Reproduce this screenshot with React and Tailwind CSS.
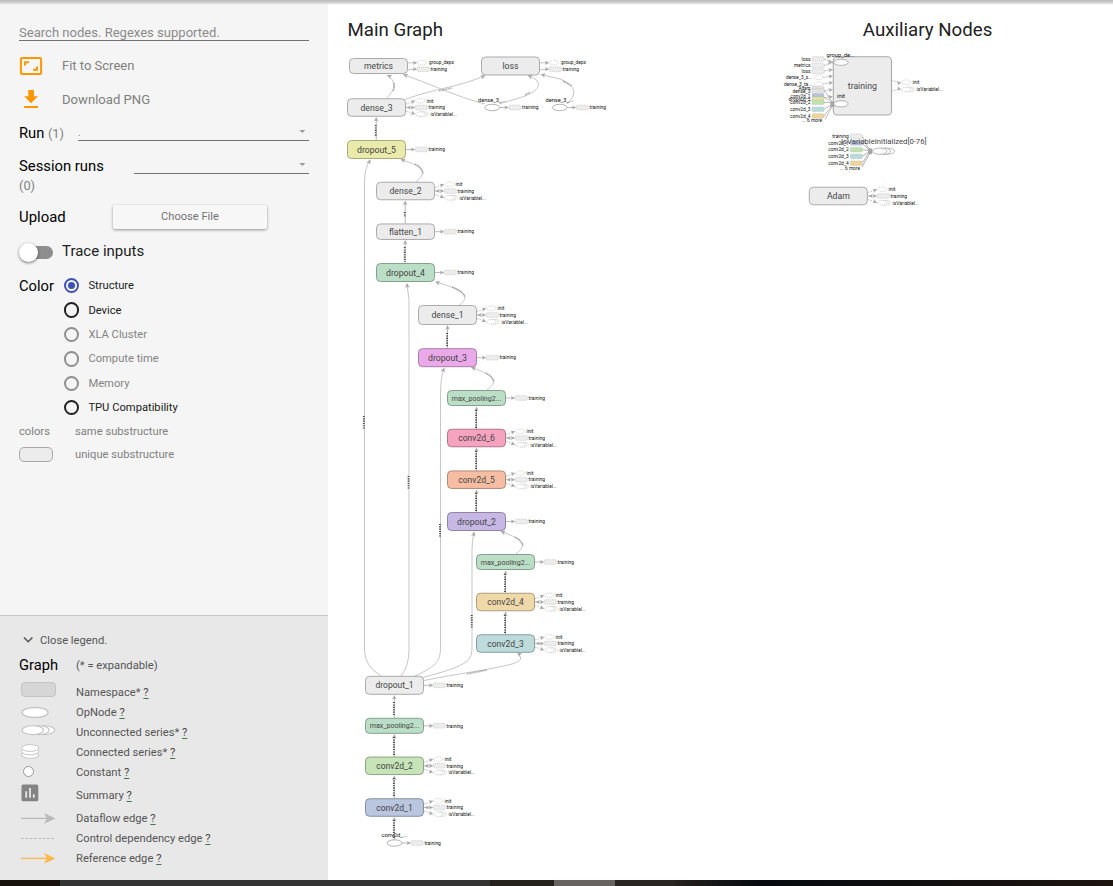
import React from "react";

const GREY = "#ececec";

// [label, centre x, centre y, height, fill, stroke, annotation kind]
const NODES = [
  ["metrics", 378.5, 66, 15, GREY, "#ababab", "none"],
  ["loss", 510.5, 66, 18, GREY, "#ababab", "none"],
  ["dense_3", 376.5, 107.5, 17.5, GREY, "#ababab", "full"],
  ["dropout_5", 376.5, 149.5, 18, "#eaeaaa", "#a9a97c", "one"],
  ["dense_2", 405.5, 191, 17.5, GREY, "#ababab", "full"],
  ["flatten_1", 405.5, 231.7, 15.5, GREY, "#ababab", "one"],
  ["dropout_4", 405.5, 272.5, 18, "#bbdec6", "#86a08f", "one"],
  ["dense_1", 447.5, 315, 19, GREY, "#ababab", "full"],
  ["dropout_3", 447.5, 357.7, 18, "#eaaaea", "#a97ca9", "one"],
  ["max_pooling2...", 476.5, 398, 15, "#bbdec6", "#86a08f", "one"],
  ["conv2d_6", 476.5, 438, 17.5, "#f6a3c0", "#b1768b", "full"],
  ["conv2d_5", 476.5, 479.7, 17.5, "#f6bda3", "#b18876", "full"],
  ["dropout_2", 476.5, 521.5, 18, "#c6b7e4", "#8f84a4", "one"],
  ["max_pooling2...", 505.5, 562, 15, "#bbdec6", "#86a08f", "one"],
  ["conv2d_4", 505.5, 602, 17.5, "#f0d9a9", "#ad9c7a", "full"],
  ["conv2d_3", 505.5, 643.5, 17.5, "#bddbdb", "#889e9e", "full"],
  ["dropout_1", 394.5, 685.3, 18, GREY, "#ababab", "one"],
  ["max_pooling2...", 394.5, 725.8, 15, "#bbdec6", "#86a08f", "one"],
  ["conv2d_2", 394.5, 765.8, 17.5, "#c6e4b7", "#8fa484", "full"],
  ["conv2d_1", 394.5, 807.5, 17.5, "#bac5e0", "#868ea1", "full"],
];

const WIDTHS = {
  metrics: 29, loss: 16, dense_3: 32, dense_2: 32, dense_1: 32, flatten_1: 33,
  dropout_1: 38, dropout_2: 39, dropout_3: 39, dropout_4: 39, dropout_5: 39,
  conv2d_1: 36.5, conv2d_2: 36.5, conv2d_3: 36.5, conv2d_4: 36.5, conv2d_5: 36.5, conv2d_6: 36.5,
  "max_pooling2...": 49.5,
};

// Vertical edges with their shape label: [x, arrow tip y, tail y, label start, label end]
const VERTICAL = [
  [376.2, 117, 140, 125, 137],
  [405.2, 200.5, 224, 212, 217],
  [405.2, 240, 263, 247, 262],
  [447.5, 325, 348, 333, 347],
  [476.5, 406.5, 429, 410, 428],
  [476.5, 447.5, 471, 451, 470],
  [476.5, 489.5, 512, 493, 512],
  [505.5, 570.5, 593, 574, 592],
  [505.5, 611.5, 635, 615, 634],
  [394.3, 695, 718, 702, 716],
  [394.3, 734, 757, 737, 756],
  [394.3, 775.5, 799, 778, 797],
  [394.3, 817, 840, 820, 839],
];

const EDGES = [
  "M386 99 C394 90 399 84 387 75",
  "M405 99.5 C432 89 460 87 485 75.5",
  "M485 104 C460 98 436 86 403 74.5",
  "M499 104 C522 97 533 95 538 87 Q541 80 528 75.5",
  "M567 104 C577 95 577 86 560 79 L541 74.5",
  "M416 182 C427 173 425 167 401 159.5",
  "M459 305.5 C470 297 467 291 436 282",
  "M487 390 C498 382 496 376 472 367.5",
  "M516 554 C527 545 525 540 501 531.5",
  "M381 676 Q364.5 666 364.5 650 L364.5 182 Q364.5 168 370 160",
  "M401 676 Q409 666 409 650 L409 300 L407 284",
  "M415 676 C436 666 440.5 662 440.5 647 L440.5 395 Q440.5 377 444 368.5",
  "M423 677.5 C465 666 472 662 472 648 L472 550 Q472 540 474 532.5",
  "M424 680.5 C461 673 489 670 512 664 Q526 660 518 653.5",
];

const ARROWS = [
  [387, 75, 205], [485.5, 75.3, -25], [403, 74.5, 197], [527.5, 75, 205], [540.5, 74.3, 195],
  [400.5, 159.3, 198], [435, 281.8, 197], [471, 367.2, 200], [500.5, 531.3, 200],
  [370.5, 159.3, -62], [406.8, 283, -98], [444.3, 367.5, -70], [474.3, 531.5, -78], [517, 652.5, 215],
];

function Arrow({ x, y, a = 0, s = 1, fill = "#aaa" }) {
  return <path d="M0 0L-4.4 2.1L-3.4 0L-4.4 -2.1Z" fill={fill} transform={`translate(${x} ${y}) rotate(${a}) scale(${s})`} />;
}

function Tiny({ x, y, children, w, anchor = "start" }) {
  return (
    <text x={x} y={y} fontSize="5" fill="#111" textAnchor={anchor} textLength={w} lengthAdjust="spacingAndGlyphs">
      {children}
    </text>
  );
}

function Pill({ x, y, fill = "#ededed" }) {
  return <rect x={x} y={y - 2.3} width="12" height="4.6" rx="1.2" fill={fill} stroke="#b8b8b8" strokeWidth="0.6" strokeDasharray="1.3 0.9" />;
}

function Oval({ x, y, rx = 4.6, ry = 2.3 }) {
  return <ellipse cx={x} cy={y} rx={rx} ry={ry} fill="#fff" stroke="#bbb" strokeWidth="0.7" strokeDasharray="1.2 1" />;
}

function Training({ x, y, both = false }) {
  return (
    <g>
      <path d={`M${x} ${y}h8`} stroke="#aaa" strokeWidth="0.8" />
      <Arrow x={x + 9.3} y={y} />
      {both && <Arrow x={x + 0.3} y={y} a={180} />}
      <Pill x={x + 9.3} y={y} />
      <Tiny x={x + 22.6} y={y + 1.7} w={16.5}>training</Tiny>
    </g>
  );
}

function Init({ x, y, ty }) {
  return (
    <g>
      <path d={`M${x} ${ty}L${x + 8} ${y + 0.5}`} stroke="#aaa" strokeWidth="0.7" strokeDasharray="1.6 1" />
      <Arrow x={x + 9.3} y={y} a={-18} />
      <Oval x={x + 14.3} y={y} />
      <Tiny x={x + 20.5} y={y + 1.7} w={7}>init</Tiny>
    </g>
  );
}

function Variables({ x, y, ty }) {
  return (
    <g>
      <path d={`M${x} ${ty}L${x + 8} ${y - 0.5}`} stroke="#aaa" strokeWidth="0.7" strokeDasharray="1.6 1" />
      <Arrow x={x + 9.3} y={y} a={18} />
      <Oval x={x + 18} y={y} />
      <Oval x={x + 16.2} y={y} />
      <Oval x={x + 14.3} y={y} />
      <Tiny x={x + 24.6} y={y + 1.9} w={26.3}>isVariableI...</Tiny>
    </g>
  );
}

function Full({ x, y }) {
  return (
    <g>
      <Init x={x} y={y - 6.7} ty={y - 3.5} />
      <Training x={x} y={y} both />
      <Variables x={x} y={y + 6.7} ty={y + 3.5} />
    </g>
  );
}

function GraphNode({ node }) {
  const [label, x, y, h, fill, stroke, kind] = node;
  const small = label.startsWith("max");
  return (
    <g>
      {kind === "full" && <Full x={x + 29.5} y={y} />}
      {kind === "one" && <Training x={x + 29.5} y={y} />}
      <rect x={x - 29} y={y - h / 2} width="58" height={h} rx="4" fill={fill} stroke={stroke} strokeWidth="1" />
      <text x={x} y={y + (small ? 2.5 : 3.1)} fontSize={small ? 7.2 : 9} fill="#444" textAnchor="middle" textLength={WIDTHS[label]} lengthAdjust="spacingAndGlyphs">
        {label}
      </text>
    </g>
  );
}

function LossDeps({ x }) {
  return (
    <g>
      <path d={`M${x} 62.8h8M${x} 69.8L${x + 8} 69.2`} stroke="#aaa" strokeWidth="0.7" />
      <Arrow x={x + 9.3} y={62.8} />
      <Arrow x={x + 9.3} y={69.2} />
      <Oval x={x + 14} y={62.6} />
      <Pill x={x + 9.3} y={69.3} />
      <Tiny x={x + 21} y={64.2} w={25}>group_deps</Tiny>
      <Tiny x={x + 22.6} y={71} w={16.5}>training</Tiny>
    </g>
  );
}

function Op({ x, y, label, lx, w }) {
  return (
    <g>
      <Training x={x + 7.3} y={y} />
      <ellipse cx={x} cy={y} rx="7.4" ry="3.2" fill="#fff" stroke="#aaa" strokeWidth="0.9" />
      <Tiny x={lx} y={y - 5.6} w={w}>{label}</Tiny>
    </g>
  );
}

const TRAINING_INPUTS = [
  ["loss", 59, 9, "pill", "#ededed"],
  ["metrics", 65.5, 16.5, "pill", "#ededed"],
  ["loss", 71.2, 9, "pill", "#ededed"],
  ["dense_3_s...", 77.4, 26, "oval", "#fff"],
  ["dense_3_ta...", 84.2, 28, "oval", "#fff"],
  ["Adam", 88.5, 12, "pill", "#e2e2e2"],
  ["dense_3", 91.2, 18, "pill", "#e2e2e2"],
  ["conv2d_1", 96, 20, "pill", "#b5c1e0"],
  ["dropout_5", 99.3, 22, "pill", "#e6e69a"],
  ["conv2d_2", 102.3, 20.5, "pill", "#bfe3ad"],
  ["conv2d_3", 109.3, 20.5, "pill", "#b7dcdc"],
  ["conv2d_4", 116, 20.5, "pill", "#f0d49a"],
];

function Auxiliary() {
  return (
    <g>
      <rect x="833.3" y="56.8" width="58.2" height="58.2" rx="4" fill={GREY} stroke="#ababab" strokeWidth="1.1" />
      <text x="862.3" y="88.9" fontSize="9" fill="#444" textAnchor="middle" textLength="29" lengthAdjust="spacingAndGlyphs">training</text>
      <g fill="none" stroke="#aaa" strokeWidth="0.8">
        <path d="M824 59L833 62M824 65.5L833 63M824 71L832 69.5M823 77.5L832 76M823 84L832 82.5M824 91L832 89.5M824 98L832 96.5" strokeDasharray="2 0.8" />
        <path d="M824 90L833 103M824 97L833 103M824 102.5H833M824 109L833 104M824 116L833 104M825 119.5L833 105" />
      </g>
      <Arrow x={833} y={62} s={1.2} />
      {[69.5, 76, 82.5, 89.5, 96.5].map((y) => <Arrow key={y} x={833} y={y} a={-8} />)}
      <rect x="830.3" y="101.5" width="4.4" height="5.4" rx="1.5" fill="#a5a5a5" />
      <ellipse cx="841" cy="62.3" rx="7.2" ry="3.1" fill="#fff" stroke="#aaa" strokeWidth="0.9" />
      <ellipse cx="841" cy="103.8" rx="7.2" ry="3.1" fill="#fff" stroke="#aaa" strokeWidth="0.9" />
      <Tiny x={826.5} y={57} w={28}>group_de...</Tiny>
      <Tiny x={837} y={98} w={8}>init</Tiny>
      {TRAINING_INPUTS.map(([label, y, w, kind, fill]) => (
        <g key={label + y}>
          {kind === "pill" ? <Pill x={812} y={y} fill={fill} /> : <Oval x={818.7} y={y} />}
          <Tiny x={kind === "pill" ? 810.5 : 812} y={y + 1.7} w={w} anchor="end">{label}</Tiny>
        </g>
      ))}
      <Tiny x={802} y={122} w={20}>... 6 more</Tiny>
      <Init x={892} y={82.2} ty={80.5} />
      <Variables x={892} y={89.5} ty={91} />

      <path d="M862 136L870 151M862 143L870 151M862 149.5L870 151M862 156.5L870 151M862 163.5L870 151M862 167L870 153" stroke="#aaa" strokeWidth="0.9" fill="none" />
      <rect x="868.3" y="148.2" width="4" height="6" rx="1.5" fill="#a5a5a5" />
      {[
        ["training", 136.3, 16.5, "#ededed"],
        ["conv2d_1", 143, 20.5, "#b5c1e0"],
        ["conv2d_2", 149.7, 20.5, "#bfe3ad"],
        ["conv2d_3", 156.4, 20.5, "#b7dcdc"],
        ["conv2d_4", 163.2, 20.5, "#f0d49a"],
      ].map(([label, y, w, fill]) => (
        <g key={label}>
          <Pill x={850.3} y={y} fill={fill} />
          <Tiny x={848.7} y={y + 1.7} w={w} anchor="end">{label}</Tiny>
        </g>
      ))}
      <Tiny x={840} y={169.8} w={20}>... 6 more</Tiny>
      <g fill="#fff" stroke="#aaa" strokeWidth="0.8">
        <ellipse cx="887.3" cy="151.2" rx="7.2" ry="3.1" />
        <ellipse cx="883.5" cy="151.2" rx="7.2" ry="3.1" />
        <ellipse cx="879.7" cy="151.2" rx="7.2" ry="3.1" />
      </g>
      <text x="841" y="143.8" fontSize="7.4" fill="#444" textLength="85.5" lengthAdjust="spacingAndGlyphs">IsVariableInitialized[0-76]</text>

      <Full x={868} y={196} />
      <rect x="809.3" y="187.2" width="58" height="17.6" rx="4" fill={GREY} stroke="#ababab" />
      <text x="838.4" y="199.1" fontSize="9" fill="#444" textAnchor="middle" textLength="23" lengthAdjust="spacingAndGlyphs">Adam</text>
    </g>
  );
}

function Graph() {
  return (
    <svg width="785" height="880" viewBox="328 0 785 880" fontFamily="Roboto, sans-serif" className="block">
      <text x="347.5" y="36" fontSize="18.6" fill="#212121" textLength="95.5" lengthAdjust="spacingAndGlyphs">Main Graph</text>
      <text x="862.8" y="36" fontSize="18.6" fill="#212121" textLength="129.5" lengthAdjust="spacingAndGlyphs">Auxiliary Nodes</text>
      {EDGES.map((d) => <path key={d} d={d} fill="none" stroke="#c6c6c6" strokeWidth="1" />)}
      {VERTICAL.map(([x, y1, y2, a, b]) => (
        <g key={x + "-" + y1}>
          <path d={`M${x} ${y1 + 2}V${y2}`} stroke="#b5b5b5" strokeWidth="1" />
          <Arrow x={x} y={y1} a={-90} s={1.05} />
          <path d={`M${x - 0.5} ${a}V${b}`} stroke="#444" strokeWidth="1.8" strokeDasharray="1.1 1.3" />
        </g>
      ))}
      {ARROWS.map(([x, y, a]) => <Arrow key={x + "," + y} x={x} y={y} a={a} s={1.1} />)}
      <g stroke="#444" strokeWidth="1.8" strokeDasharray="1.1 1.2">
        <path d="M363.8 416V429M408.5 476V489M440 524V537M471.7 615V628" />
      </g>
      <g stroke="#888" strokeWidth="1.6" strokeDasharray="1 0.5" fill="none" opacity="0.7">
        <path d="M393.5 83Q395 87 393 91M439 91L452 88M525 95L530 92M563 81L572 86M415 164Q423 168 423 174M452 287Q463 291 465 297M486 373Q493 377 494 382M515 537Q522 541 523 546M467 674L487 670" />
      </g>
      <LossDeps x={408} />
      <LossDeps x={540} />
      <Op x={492.2} y={107.5} label="dense_3_..." lx={478} w={28} />
      <Op x={559.7} y={107.5} label="dense_3_..." lx={545.5} w={28} />
      <Op x={394.5} y={843} label="conv2d_..." lx={381.5} w={26} />
      {NODES.map((n) => <GraphNode key={n[0] + n[2]} node={n} />)}
      <Auxiliary />
    </svg>
  );
}

function Radio({ label, state }) {
  const ring = { on: "border-[#3f51b5]", off: "border-[#212121]", disabled: "border-[#8f8f8f]" }[state];
  return (
    <div className="flex h-[24.4px] items-center">
      <span className={`flex size-[15.4px] items-center justify-center rounded-full border-2 ${ring}`}>
        {state === "on" && <span className="size-[7.6px] rounded-full bg-[#3f51b5]" />}
      </span>
      <span className={`ml-[9px] mt-[2px] text-[11.2px] ${state === "disabled" ? "text-[#848484]" : "text-[#212121]"}`}>{label}</span>
    </div>
  );
}

function Select({ children, className }) {
  return (
    <div className={`flex items-start justify-between border-b border-[#737373] ${className}`}>
      <span className="pt-[2px] text-[10px] leading-5 text-[#777]">{children}</span>
      <svg width="7" height="4" viewBox="0 0 7 4" className="mr-[3px] mt-[9px]"><path d="M0.3 0H6.3L3.3 3Z" fill="#9a9a9a" /></svg>
    </div>
  );
}

function LegendRow({ h, label, mt = "", children }) {
  return (
    <div className={`flex items-center ${h}`}>
      <div className={`flex w-[57px] items-center pl-[2px] ${mt}`}>{children}</div>
      <span className="mt-[2px] whitespace-nowrap text-[11.2px] text-[#555]">
        {label} <span className="text-[#444] underline decoration-[#3b7a4a] decoration-1 underline-offset-2">?</span>
      </span>
    </div>
  );
}

function Line({ color, dashed }) {
  return (
    <svg width="35" height="12" viewBox="0 0 35 12">
      <path d={dashed ? "M0 6.5H34" : "M0 6.4H26"} stroke={color} strokeWidth={dashed ? 1 : 1.3} strokeDasharray={dashed ? "3 1.3" : undefined} />
      {!dashed && <path d="M34.5 6.4L23 11.7L26 6.4L23 1.1Z" fill={color} />}
    </svg>
  );
}

function Legend() {
  return (
    <section className="h-[265px] border-t border-[#c8c8c8] bg-[#e8e8e8] pl-[19px] pt-[12px]">
      <div className="flex h-[24px] items-center">
        <svg width="11" height="8" viewBox="0 0 11 8" className="ml-[4px]"><path d="M1 1.5L5.2 5.7L9.4 1.5" fill="none" stroke="#555" strokeWidth="1.6" /></svg>
        <span className="ml-[6px] mt-[2px] text-[11.2px] text-[#555]">Close legend.</span>
      </div>
      <div className="flex h-[26px] items-center">
        <span className="w-[57px] text-[14.7px] text-black">Graph</span>
        <span className="mt-[2px] text-[11.2px] text-[#555]">(* = expandable)</span>
      </div>
      <div className="pt-[4px]">
        <LegendRow h="h-[20px]" label="Namespace*" mt="-mt-[5px]">
          <span className="h-[15px] w-[34.5px] rounded-[4px] border border-[#c3c3c3] bg-[#d6d6d6]" />
        </LegendRow>
        <LegendRow h="h-[20px]" label="OpNode">
          <svg width="28" height="12" viewBox="0 0 28 12"><ellipse cx="14" cy="6.5" rx="13" ry="5" fill="#fff" stroke="#c4c4c4" strokeWidth="1.3" /></svg>
        </LegendRow>
        <LegendRow h="h-[20px]" label="Unconnected series*" mt="-mt-[3px]">
          <svg width="36" height="11" viewBox="0 0 36 11" fill="#fff" stroke="#c4c4c4" strokeWidth="1.1">
            <ellipse cx="23" cy="5.2" rx="10.6" ry="4.4" /><ellipse cx="17.5" cy="5.2" rx="10.6" ry="4.4" /><ellipse cx="11.8" cy="5.2" rx="10.6" ry="4.4" />
          </svg>
        </LegendRow>
        <LegendRow h="h-[20px]" label="Connected series*" mt="-mt-[2px]">
          <svg width="19" height="15" viewBox="0 0 19 15" fill="#fff" stroke="#c4c4c4" strokeWidth="1">
            <ellipse cx="9.2" cy="11" rx="8.6" ry="3.4" /><ellipse cx="9.2" cy="7.5" rx="8.6" ry="3.4" /><ellipse cx="9.2" cy="4" rx="8.6" ry="3.4" />
          </svg>
        </LegendRow>
        <LegendRow h="h-[20px]" label="Constant" mt="-mt-[1px]">
          <span className="ml-[2px] size-[11px] rounded-full border border-[#999] bg-white" />
        </LegendRow>
        <LegendRow h="h-[26px]" label="Summary" mt="-mt-[4px]">
          <svg width="18" height="18" viewBox="0 0 18 18"><rect x="0.5" y="0.5" width="16.8" height="16.8" rx="1.6" fill="#848484" /><path d="M5.2 13.7V7.2M9 13.7V4M12.8 13.7V10.3" stroke="#e8e8e8" strokeWidth="1.8" /></svg>
        </LegendRow>
        <LegendRow h="h-[20px]" label="Dataflow edge"><Line color="#b9b9b9" /></LegendRow>
        <LegendRow h="h-[20px]" label="Control dependency edge"><Line color="#bebebe" dashed /></LegendRow>
        <LegendRow h="h-[20px]" label="Reference edge"><Line color="#ffb74d" /></LegendRow>
      </div>
    </section>
  );
}

function Sidebar() {
  return (
    <aside className="flex h-[880px] w-[328px] shrink-0 flex-col justify-between bg-[#f5f5f5]">
      <div className="pl-[19px] pr-[19px] pt-[20px]">
        <div className="flex h-[21px] w-full items-center border-b border-[#737373] pt-[6px] text-[13.05px] text-[#8a8a8a]">Search nodes. Regexes supported.</div>
        <div className="mt-[8px] flex h-[34px] items-center">
          <svg width="24" height="20" viewBox="0 0 24 20" className="mr-[19px]" fill="none" stroke="#ff9800" strokeWidth="2"><rect x="1.9" y="2" width="20.2" height="16" rx="1.2" /><path d="M6 9.6V6.2H10M14 13.8H18V10.4" /></svg>
          <span className="text-[13px] text-[#808080]">Fit to Screen</span>
        </div>
        <div className="flex h-[34px] items-center">
          <svg width="24" height="20" viewBox="0 0 24 20" className="mr-[19px]" fill="#ff9800"><path d="M9.3 0H15V6.3H19L12 13.3L5.2 6.3H9.3ZM5 16H19V18H5Z" /></svg>
          <span className="text-[13.1px] text-[#808080]">Download PNG</span>
        </div>
        <div className="flex h-[32px] justify-between">
          <span className="pt-[5px] text-[14.7px] leading-[22px] text-black">Run <span className="text-[12.8px] text-[#808080]">(1)</span></span>
          <Select className="mt-[4px] h-[20px] w-[231px]">.</Select>
        </div>
        <div className="flex h-[50px] justify-between">
          <div className="flex flex-col pt-[6px]">
            <span className="text-[14.8px] leading-[22px] text-black">Session runs</span>
            <span className="text-[12.8px] leading-[17px] text-[#808080]">(0)</span>
          </div>
          <Select className="mt-[5px] h-[20px] w-[175px]" />
        </div>
        <div className="flex h-[35px] items-center">
          <span className="mt-[2px] w-[94px] text-[14.9px] text-black">Upload</span>
          <span className="flex h-[24px] w-[154px] items-center justify-center rounded-[2px] bg-[#f7f7f7] pt-[2px] text-[11.1px] text-[#737373] shadow-[0_1px_3px_rgba(0,0,0,0.4)]">Choose File</span>
        </div>
        <div className="flex h-[36px] items-center">
          <div className="flex w-[43px] items-center">
            <span className="z-10 size-[19px] rounded-full bg-white shadow-[0_1px_3px_rgba(0,0,0,0.55)]" />
            <span className="-ml-[8px] h-[13px] w-[23px] rounded-r-full bg-[#8e8e8e]" />
          </div>
          <span className="-mt-[2px] text-[15px] text-[#212121]">Trace inputs</span>
        </div>
        <div className="flex pt-[3.5px]">
          <span className="w-[45px] text-[14.7px] leading-[25px] text-black">Color</span>
          <div>
            <Radio label="Structure" state="on" />
            <Radio label="Device" state="off" />
            <Radio label="XLA Cluster" state="disabled" />
            <Radio label="Compute time" state="disabled" />
            <Radio label="Memory" state="disabled" />
            <Radio label="TPU Compatibility" state="off" />
          </div>
        </div>
        <div className="flex h-[24px] items-center pt-[2px] text-[11.2px] text-[#808080]"><span className="w-[56px]">colors</span><span>same substructure</span></div>
        <div className="flex h-[22px] items-center text-[11.2px] text-[#808080]">
          <span className="mr-[22px] h-[15px] w-[34px] rounded-[5px] border-[1.5px] border-[#a8a8a8] bg-[#ececec]" /><span className="mt-[2px]">unique substructure</span>
        </div>
      </div>
      <Legend />
    </aside>
  );
}

export default function App() {
  return (
    <div className="relative h-[886px] w-[1113px] overflow-hidden bg-white font-['Roboto',sans-serif]">
      <div className="flex h-[880px]">
        <Sidebar />
        <main className="h-[880px] w-[785px]"><Graph /></main>
      </div>
      <div className="flex h-[6px]">
        <div className="w-[60px] bg-[#18120c]" />
        <div className="w-[430px] bg-[#333]" />
        <div className="w-[64px] bg-[#25211c]" />
        <div className="w-[61px] bg-[#666361]" />
        <div className="w-[60px] bg-[#282522]" />
        <div className="flex-1 bg-linear-to-r from-[#24211e] via-[#060a0e] via-20% to-[#1d1410]" />
      </div>
      <div className="absolute left-0 top-0 h-[5px] w-full bg-linear-to-b from-[#b9b9b9] via-[#d0d0d0] via-50% to-transparent" />
    </div>
  );
}
